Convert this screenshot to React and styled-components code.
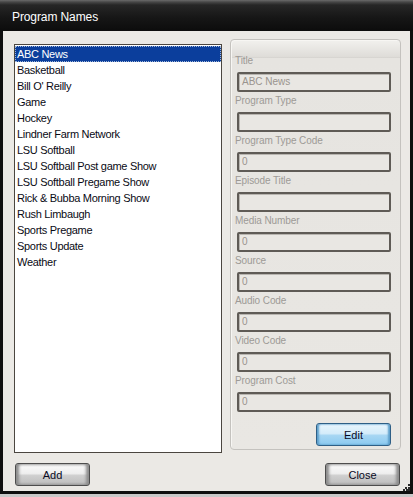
import React, { useState } from "react";
import styled, { createGlobalStyle } from "styled-components";

const GlobalStyle = createGlobalStyle`
  html, body {
    margin: 0;
    padding: 0;
    background: #c9c9c9;
    font-family: "Liberation Sans", Arial, sans-serif;
  }
`;

const programs = [
  "ABC News",
  "Basketball",
  "Bill O' Reilly",
  "Game",
  "Hockey",
  "Lindner Farm Network",
  "LSU Softball",
  "LSU Softball Post game Show",
  "LSU Softball Pregame Show",
  "Rick & Bubba Morning Show",
  "Rush Limbaugh",
  "Sports Pregame",
  "Sports Update",
  "Weather",
];

const fields = [
  { label: "Title", value: "ABC News" },
  { label: "Program Type", value: "" },
  { label: "Program Type Code", value: "0" },
  { label: "Episode Title", value: "" },
  { label: "Media Number", value: "0" },
  { label: "Source", value: "0" },
  { label: "Audio Code", value: "0" },
  { label: "Video Code", value: "0" },
  { label: "Program Cost", value: "0" },
];

const App = () => {
  const [selected, setSelected] = useState(0);

  return (
    <>
      <GlobalStyle />
      <Window>
        <TitleBar>Program Names</TitleBar>
        <Body>
          <MainRow>
            <ListBox>
              {programs.map((p, i) => (
                <ListItem
                  key={p}
                  $selected={i === selected}
                  onClick={() => setSelected(i)}
                >
                  {p}
                </ListItem>
              ))}
            </ListBox>

            <GroupBox>
              {fields.map((f) => (
                <Field key={f.label}>
                  <FieldLabel>{f.label}</FieldLabel>
                  <FieldInput>{f.value}</FieldInput>
                </Field>
              ))}
              <EditRow>
                <Button $blue>Edit</Button>
              </EditRow>
            </GroupBox>
          </MainRow>

          <ButtonRow>
            <Button>Add</Button>
            <Button>Close</Button>
          </ButtonRow>
          <Grip width="7" height="7" viewBox="0 0 7 7">
            <rect x="5" y="0" width="2" height="2" fill="#2a2a2a" />
            <rect x="2" y="3" width="2" height="2" fill="#2a2a2a" />
            <rect x="5" y="3" width="2" height="2" fill="#2a2a2a" />
            <rect x="0" y="5" width="2" height="2" fill="#2a2a2a" />
            <rect x="3" y="5" width="2" height="2" fill="#2a2a2a" />
            <rect x="5" y="5" width="2" height="2" fill="#2a2a2a" />
          </Grip>
        </Body>
      </Window>
    </>
  );
};

export default App;

const Window = styled.div`
  width: 413px;
  height: 494px;
  display: flex;
  flex-direction: column;
  box-sizing: border-box;
`;

const TitleBar = styled.div`
  height: 31px;
  flex-shrink: 0;
  box-sizing: border-box;
  padding: 10px 0 0 12px;
  color: #ffffff;
  font-size: 12px;
  letter-spacing: -0.1px;
  line-height: 15px;
  background: linear-gradient(
    to bottom,
    #6a6a6a 0px,
    #474747 2px,
    #262626 5px,
    #161616 18px,
    #0c0c0c 31px
  );
`;

const Body = styled.div`
  position: relative;
  flex: 1;
  display: flex;
  flex-direction: column;
  box-sizing: border-box;
  background: #ebe9e5;
  border: 3px solid #0f0f0f;
  border-top: none;
`;

const MainRow = styled.div`
  display: flex;
  align-items: flex-start;
  gap: 8px;
  padding: 8px 9px 0 11px;
`;

const ListBox = styled.div`
  margin-top: 5px;
  width: 210px;
  height: 409px;
  box-sizing: border-box;
  border: 1px solid #4b4640;
  background: #ffffff;
  padding-top: 1px;
`;

const ListItem = styled.div`
  height: 16px;
  line-height: 16px;
  font-size: 11px;
  letter-spacing: -0.3px;
  padding-left: 2px;
  box-sizing: border-box;
  color: ${(p) => (p.$selected ? "#ffffff" : "#0a0a14")};
  background: ${(p) => (p.$selected ? "#0b3e9c" : "transparent")};
  outline: ${(p) => (p.$selected ? "1px dotted #9fb6d8" : "none")};
  outline-offset: -1px;
  cursor: default;
`;

const GroupBox = styled.div`
  width: 171px;
  height: 411px;
  box-sizing: border-box;
  border: 1px solid #c4c2be;
  border-radius: 4px;
  padding: 12px 9px 0 6px;
  display: flex;
  flex-direction: column;
  background: linear-gradient(
    to bottom,
    #f2f1ee 0px,
    #dedcd8 17px,
    #c9c7c3 17px,
    #e6e4e0 18px,
    #e9e7e3 100%
  );
  box-shadow: inset 1px 1px 0 #f7f6f3;
`;

const Field = styled.div`
  display: flex;
  flex-direction: column;
`;

const FieldLabel = styled.div`
  height: 20px;
  line-height: 18px;
  font-size: 10px;
  letter-spacing: -0.1px;
  color: #9d9a96;
  margin-left: -2px;
`;

const FieldInput = styled.div`
  height: 20px;
  width: 154px;
  box-sizing: border-box;
  border: 2px solid #5f5b56;
  border-radius: 2px;
  background: #e9e7e3;
  box-shadow: inset 1px 1px 0 #b8b5b0;
  padding-left: 3px;
  font-size: 10px;
  line-height: 16px;
  color: #9a948e;
`;

const EditRow = styled.div`
  display: flex;
  justify-content: flex-end;
  margin-top: 11px;
`;

const ButtonRow = styled.div`
  display: flex;
  justify-content: space-between;
  padding: 0 10px 0 12px;
  margin-top: 10px;
`;

const Button = styled.button`
  width: 75px;
  height: 23px;
  box-sizing: border-box;
  border-radius: 3px;
  font-family: "Liberation Sans", Arial, sans-serif;
  font-size: 11px;
  color: #0a0a1e;
  padding: 0;
  border: 1px solid ${(p) => (p.$blue ? "#2f5f86" : "#4d4d4d")};
  background: ${(p) =>
    p.$blue
      ? "linear-gradient(to bottom, #e9f6fd 0%, #d4ecfa 45%, #a6d6f3 55%, #8ccaf0 100%)"
      : "linear-gradient(to bottom, #fbfbfb 0%, #eeeeee 45%, #cfcfcf 55%, #bdbdbd 100%)"};
  box-shadow: ${(p) =>
    p.$blue
      ? "inset 2px 0 2px #5d9fcb, inset -2px 0 2px #5d9fcb"
      : "inset 3px 0 3px #8d8d8d, inset -3px 0 3px #8d8d8d"};
`;

const Grip = styled.svg`
  position: absolute;
  right: 0;
  bottom: 0;
`;
